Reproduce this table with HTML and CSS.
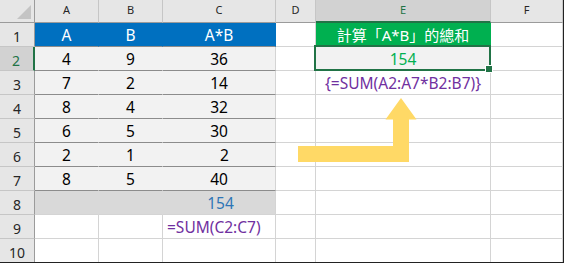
FILE: index.html
```html
<!DOCTYPE html>
<html lang="zh-Hant">
<head>
<meta charset="utf-8">
<title>SUM</title>
<link rel="stylesheet" href="styles.css">
</head>
<body>
<div class="sheet">
  <div class="corner"><svg width="34" height="22" viewBox="0 0 34 22"><polygon points="17,19 31,5 31,19" fill="#c4c4c4"/></svg></div>
  <div class="ch">A</div><div class="ch">B</div><div class="ch">C</div><div class="ch">D</div><div class="ch sel">E</div><div class="ch">F</div>

  <div class="rh">1</div>
  <div class="c hd">A</div><div class="c hd">B</div><div class="c hd">A*B</div>
  <div class="c"></div><div class="c title">計算「A*B」的總和</div><div class="c"></div>

  <div class="rh sel">2</div>
  <div class="c tb">4</div><div class="c tb">9</div><div class="c tb tbc">36</div>
  <div class="c"></div><div class="c active">154</div><div class="c"></div>

  <div class="rh">3</div>
  <div class="c tb">7</div><div class="c tb">2</div><div class="c tb tbc">14</div>
  <div class="c"></div><div class="c fx-e">{=SUM(A2:A7*B2:B7)}</div><div class="c"></div>

  <div class="rh">4</div>
  <div class="c tb">8</div><div class="c tb">4</div><div class="c tb tbc">32</div>
  <div class="c"></div><div class="c"></div><div class="c"></div>

  <div class="rh">5</div>
  <div class="c tb">6</div><div class="c tb">5</div><div class="c tb tbc">30</div>
  <div class="c"></div><div class="c"></div><div class="c"></div>

  <div class="rh">6</div>
  <div class="c tb">2</div><div class="c tb">1</div><div class="c tb tbc indent">2</div>
  <div class="c"></div><div class="c"></div><div class="c"></div>

  <div class="rh">7</div>
  <div class="c tb">8</div><div class="c tb">5</div><div class="c tb tbc">40</div>
  <div class="c"></div><div class="c"></div><div class="c"></div>

  <div class="rh">8</div>
  <div class="c tot"></div><div class="c tot"></div><div class="c tot totc">154</div>
  <div class="c"></div><div class="c"></div><div class="c"></div>

  <div class="rh">9</div>
  <div class="c"></div><div class="c"></div><div class="c fx-c">=SUM(C2:C7)</div>
  <div class="c"></div><div class="c"></div><div class="c"></div>

  <div class="rh">10</div>
  <div class="c"></div><div class="c"></div><div class="c"></div>
  <div class="c"></div><div class="c"></div><div class="c"></div>

  <svg class="arrow" width="563" height="262" viewBox="0 0 563 262">
    <polygon points="298,146 393,146 393,119.5 385.5,119.5 401,98 416.5,119.5 409,119.5 409,162 298,162" fill="#ffd966"/>
  </svg>
</div>
</body>
</html>
```

FILE: styles.css
```css
html, body {
  margin: 0;
  padding: 0;
  background: #ffffff;
}

body {
  font-family: "Noto Sans", "Noto Sans CJK TC", sans-serif;
}

.sheet {
  position: relative;
  width: 564px;
  height: 263px;
  box-sizing: border-box;
  border-right: 1px solid #222;
  border-bottom: 1px solid #222;
  overflow: hidden;
  display: grid;
  grid-template-columns: 35px 64px 64px 113px 40px 175px 72px;
  grid-template-rows: 23px repeat(10, 24px);
}

.sheet > div {
  box-sizing: border-box;
  display: flex;
  align-items: center;
  justify-content: center;
  white-space: nowrap;
}

.corner {
  background: #e6e6e6;
  border-right: 1px solid #9b9b9b;
  border-bottom: 1px solid #9b9b9b;
}

.corner svg {
  display: block;
  align-self: flex-start;
}

.ch {
  background: #e6e6e6;
  border-right: 1px solid #c6c6c6;
  border-bottom: 1px solid #9b9b9b;
  font-size: 11px;
  color: #262626;
  padding-bottom: 3px;
}

.ch.sel {
  background: #d2d2d2;
  color: #217346;
  border-bottom: 2px solid #217346;
  padding-bottom: 2px;
}

.rh {
  background: #e6e6e6;
  border-right: 1px solid #9b9b9b;
  border-bottom: 1px solid #c6c6c6;
  font-size: 14px;
  color: #262626;
  padding-top: 4px;
}

.rh.sel {
  background: #d2d2d2;
  color: #217346;
  border-right: 2px solid #217346;
  padding-right: 1px;
}

.c {
  background: #ffffff;
  border-right: 1px solid #d4d4d4;
  border-bottom: 1px solid #d4d4d4;
  font-size: 15.5px;
  color: #000000;
}

.hd {
  background: #0070c0;
  color: #ffffff;
  border-right-color: #0070c0;
  border-bottom-color: #8c8c8c;
}

.tb {
  background: #f2f2f2;
  border-right-color: #f2f2f2;
  border-bottom-color: #8c8c8c;
}

.tbc {
  border-right-color: #d4d4d4;
}

.indent {
  padding-left: 11px;
}

.tot {
  background: #d9d9d9;
  border-right-color: #d9d9d9;
}

.totc {
  border-right-color: #d4d4d4;
  color: #2e75b6;
  padding-left: 3px;
}

.title {
  background: #00b050;
  color: #ffffff;
  border-right-color: #00b050;
  border-bottom-color: #00b050;
  font-size: 15px;
}

.active {
  position: relative;
  background: #f2f2f2;
  color: #00b050;
}

.active::after {
  content: "";
  position: absolute;
  left: -2px;
  top: -2px;
  right: -1px;
  bottom: -1px;
  border: 2px solid #217346;
}

.active::before {
  content: "";
  position: absolute;
  right: -3px;
  bottom: -3px;
  width: 6px;
  height: 6px;
  background: #217346;
  border: 1px solid #ffffff;
  z-index: 2;
}

.fx-e {
  color: #7030a0;
}

.sheet > .fx-c {
  color: #7030a0;
  justify-content: flex-start;
  padding-left: 4px;
}

.arrow {
  position: absolute;
  left: 0;
  top: 0;
  pointer-events: none;
}
```
